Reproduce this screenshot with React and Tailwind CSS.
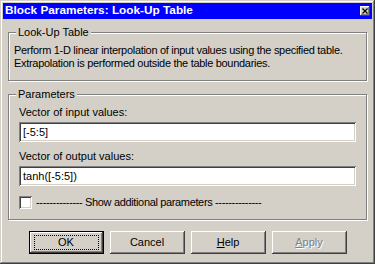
import React from 'react';

// classic win2k bevels
const raised = 'shadow-[inset_-1px_-1px_#404040,inset_1px_1px_#ffffff,inset_-2px_-2px_#808080,inset_2px_2px_#d4d0c8]';
const sunken = 'shadow-[inset_1px_1px_#808080,inset_-1px_-1px_#ffffff,inset_2px_2px_#404040,inset_-2px_-2px_#d4d0c8]';
const font = { fontFamily: '"Liberation Sans", Arial, sans-serif' };

function GroupBox({ title, className, children }) {
  return (
    <div className={`relative border border-[#808080] shadow-[inset_1px_1px_#ffffff,1px_1px_#ffffff] ${className}`}>
      <span className="absolute left-[7px] top-[-8px] bg-[#d4d0c8] px-[2px] leading-[14px]">{title}</span>
      {children}
    </div>
  );
}

function Field({ label, value }) {
  return (
    <div className="flex flex-col">
      <div className="h-[13px] leading-[13px]">{label}</div>
      <div className={`mt-[3px] h-[20px] bg-white ${sunken} pl-[4px] leading-[20px] text-black`}>{value}</div>
    </div>
  );
}

function Button({ children, def, disabled }) {
  if (def) {
    return (
      <div className="w-[75px] h-[23px] border border-black">
        <div className={`w-full h-full ${raised} flex items-center justify-center`}>
          <div className="w-[65px] h-[15px] border border-dotted border-black flex items-center justify-center leading-none">{children}</div>
        </div>
      </div>
    );
  }
  return (
    <div className={`w-[75px] h-[23px] ${raised} flex items-center justify-center leading-none ${disabled ? 'text-[#808080] [text-shadow:1px_1px_#ffffff]' : ''}`}>
      {children}
    </div>
  );
}

export default function App() {
  return (
    <div
      className="w-[375px] h-[264px] bg-[#d4d0c8] p-[3px] flex flex-col text-[11px] text-black shadow-[inset_-1px_-1px_#404040,inset_1px_1px_#d4d0c8,inset_-2px_-2px_#808080,inset_2px_2px_#ffffff]"
      style={font}
    >
      {/* Title bar */}
      <div className="h-[16px] bg-[#0000ff] flex items-center justify-between pl-[2px] pr-[2px]">
        <span className="text-white font-bold text-[11.8px] leading-none">Block Parameters: Look-Up Table</span>
        <div className={`w-[10px] h-[10px] bg-[#d4d0c8] ${raised} flex items-center justify-center`}>
          <svg width="6" height="6" viewBox="0 0 6 6">
            <path d="M0.5 0.5L5.5 5.5M5.5 0.5L0.5 5.5" stroke="#000" strokeWidth="1.2" />
          </svg>
        </div>
      </div>

      <div className="flex flex-col px-[5px]">
        <GroupBox title="Look-Up Table" className="mt-[13px] h-[49px] pl-[5px] pt-[11px]">
          <div className="leading-[13px] tracking-[-0.3px]">
            Perform 1-D linear interpolation of input values using the specified table.
            <br />
            Extrapolation is performed outside the table boundaries.
          </div>
        </GroupBox>

        <GroupBox title="Parameters" className="mt-[13px] h-[126px] px-[10px] pt-[11px]">
          <div className="flex flex-col gap-[8px]">
            <Field label="Vector of input values:" value="[-5:5]" />
            <Field label="Vector of output values:" value="tanh([-5:5])" />
            <div className="flex items-center gap-[4px] mt-[2px]">
              <div className={`w-[13px] h-[13px] bg-white ${sunken}`} />
              <span className="leading-[13px] tracking-[-0.35px]">-------------- Show additional parameters --------------</span>
            </div>
          </div>
        </GroupBox>

        <div className="mt-[11px] flex justify-center gap-[6px]">
          <Button def>OK</Button>
          <Button>Cancel</Button>
          <Button><span><span className="underline">H</span>elp</span></Button>
          <Button disabled><span><span className="underline">A</span>pply</span></Button>
        </div>
      </div>
    </div>
  );
}
